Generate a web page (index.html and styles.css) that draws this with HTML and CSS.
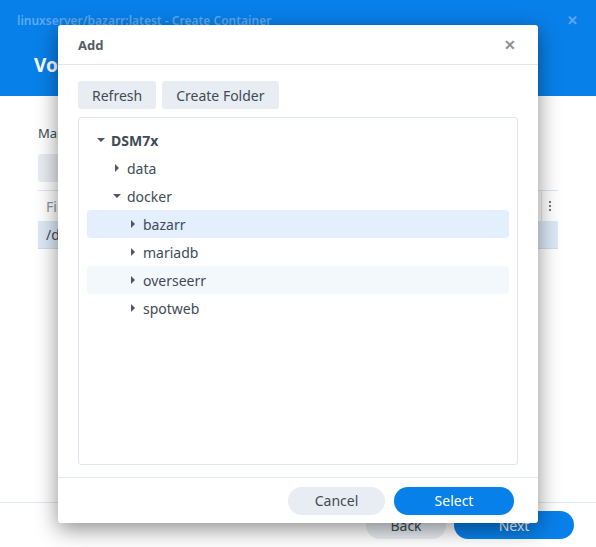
FILE: index.html
```html
<!DOCTYPE html>
<html lang="en">
<head>
  <meta charset="UTF-8">
  <title>Create Container</title>
  <link rel="stylesheet" href="styles.css">
</head>
<body>
  <div class="window">
    <div class="win-header">
      <div class="win-top">
        <span class="win-title">linuxserver/bazarr:latest - Create Container</span>
        <span class="win-close">&#x2715;</span>
      </div>
      <h1 class="win-heading">Volume Settings</h1>
    </div>

    <div class="win-body">
      <div class="section-label">Mapped volumes</div>
      <div class="toolbar">
        <button class="btn-grey">Add</button>
      </div>
      <div class="table">
        <div class="table-head">
          <span class="col-file">File/Folder</span>
          <span class="col-sep"></span>
          <span class="col-menu">
            <i></i><i></i><i></i>
          </span>
        </div>
        <div class="table-row">
          <span class="col-file">/docker/bazarr</span>
        </div>
      </div>
    </div>

    <div class="win-footer">
      <button class="pill pill-grey">Back</button>
      <button class="pill pill-blue">Next</button>
    </div>
  </div>

  <div class="modal">
    <div class="modal-header">
      <span class="modal-title">Add</span>
      <span class="modal-close">&#x2715;</span>
    </div>

    <div class="modal-body">
      <div class="toolbar">
        <button class="btn-grey">Refresh</button>
        <button class="btn-grey">Create Folder</button>
      </div>

      <div class="tree">
        <div class="node root level-0"><span class="caret open"></span>DSM7x</div>
        <div class="node level-1"><span class="caret"></span>data</div>
        <div class="node level-1"><span class="caret open"></span>docker</div>
        <div class="node level-2 selected"><span class="caret"></span>bazarr</div>
        <div class="node level-2"><span class="caret"></span>mariadb</div>
        <div class="node level-2 hover"><span class="caret"></span>overseerr</div>
        <div class="node level-2"><span class="caret"></span>spotweb</div>
      </div>
    </div>

    <div class="modal-footer">
      <button class="pill pill-grey">Cancel</button>
      <button class="pill pill-blue wide">Select</button>
    </div>
  </div>
</body>
</html>
```

FILE: styles.css
```css
* {
  box-sizing: border-box;
}

body {
  margin: 0;
  width: 596px;
  height: 547px;
  overflow: hidden;
  font-family: "Noto Sans", "Open Sans", sans-serif;
  font-size: 13px;
  color: #414b55;
  background: #fff;
  position: relative;
}

button {
  font-family: inherit;
  font-size: 14px;
  border: none;
  cursor: pointer;
}

/* background window */
.window {
  height: 547px;
  display: flex;
  flex-direction: column;
}

.win-header {
  background: #0880ea;
  height: 96px;
  padding: 10px 18px 0 17px;
}

.win-top {
  display: flex;
  justify-content: space-between;
  align-items: center;
  height: 20px;
}

.win-title {
  color: rgba(255, 255, 255, 0.35);
  font-size: 12px;
  font-weight: 600;
}

.win-close {
  color: rgba(255, 255, 255, 0.35);
  font-size: 13px;
  font-weight: 700;
}

.win-heading {
  margin: 22px 0 0 17px;
  color: #fff;
  font-size: 19px;
  font-weight: 700;
}

.win-body {
  flex: 1;
  padding: 28px 38px 0 38px;
}

.section-label {
  font-size: 13px;
  height: 20px;
}

.win-body .toolbar {
  margin-top: 10px;
}

.win-body .btn-grey {
  width: 70px;
}

.table {
  margin-top: 8px;
  border-top: 1px solid #dde5ee;
}

.table-head {
  display: flex;
  align-items: center;
  height: 30px;
  color: #8a949e;
}

.col-file {
  flex: 1;
  padding-left: 8px;
  font-size: 14px;
}

.col-sep {
  width: 1px;
  height: 30px;
  background: #dde5ee;
}

.col-menu {
  width: 16px;
  display: flex;
  flex-direction: column;
  align-items: center;
  gap: 2px;
}

.col-menu i {
  width: 2px;
  height: 2px;
  background: #777;
}

.table-row {
  display: flex;
  align-items: center;
  height: 28px;
  background: #dde9f8;
  border-bottom: 1px solid #cfdcec;
}

.win-footer {
  border-top: 1px solid #e2e8ef;
  height: 45px;
  display: flex;
  justify-content: flex-end;
  align-items: center;
  gap: 8px;
  padding: 0 22px 0 0;
}

.win-footer .pill-grey {
  width: 80px;
}

.win-footer .pill-blue {
  width: 120px;
}

/* shared controls */
.toolbar {
  display: flex;
  gap: 6px;
}

.btn-grey {
  background: #e8edf3;
  color: #414b55;
  height: 28px;
  padding: 0 14px;
  border-radius: 3px;
}

.pill {
  height: 28px;
  border-radius: 14px;
}

.pill-grey {
  background: #e8edf3;
  color: #414b55;
}

.pill-blue {
  background: #0880ea;
  color: #fff;
}

/* modal dialog */
.modal {
  position: absolute;
  left: 58px;
  top: 25px;
  width: 480px;
  height: 498px;
  background: #fff;
  border-radius: 3px;
  box-shadow: 0 6px 22px rgba(0, 0, 0, 0.45);
  display: flex;
  flex-direction: column;
}

.modal-header {
  height: 40px;
  border-bottom: 1px solid #dde5ee;
  display: flex;
  justify-content: space-between;
  align-items: center;
  padding: 0 22px 0 20px;
}

.modal-title {
  font-weight: 700;
  color: #555d66;
  font-size: 13px;
}

.modal-close {
  color: #8c9196;
  font-weight: 700;
  font-size: 14px;
}

.modal-body {
  flex: 1;
  padding: 16px 20px 12px 20px;
  display: flex;
  flex-direction: column;
}

.tree {
  flex: 1;
  margin-top: 8px;
  border: 1px solid #dde5ee;
  border-radius: 3px;
  padding: 8px 8px 0 8px;
}

.node {
  height: 28px;
  display: flex;
  align-items: center;
  border-radius: 4px;
  font-size: 14px;
  color: #414b55;
}

.node.root {
  font-weight: 700;
}

.node.selected {
  background: #e3effc;
}

.node.hover {
  background: #f3f8fd;
}

.level-0 { padding-left: 9px; }
.level-1 { padding-left: 25px; }
.level-2 { padding-left: 41px; }

.caret {
  width: 15px;
  height: 10px;
  flex: none;
  position: relative;
}

.caret::before {
  content: "";
  position: absolute;
  left: 3px;
  top: 1px;
  border-left: 4px solid #4e565f;
  border-top: 4px solid transparent;
  border-bottom: 4px solid transparent;
}

.caret.open::before {
  left: 1px;
  top: 3px;
  border-top: 4px solid #4e565f;
  border-left: 4px solid transparent;
  border-right: 4px solid transparent;
  border-bottom: none;
}

.modal-footer {
  height: 46px;
  border-top: 1px solid #e2e8ef;
  display: flex;
  justify-content: flex-end;
  align-items: center;
  gap: 9px;
  padding: 0 24px 0 0;
}

.modal-footer .pill-grey {
  width: 97px;
}

.modal-footer .pill-blue {
  width: 120px;
}
```
